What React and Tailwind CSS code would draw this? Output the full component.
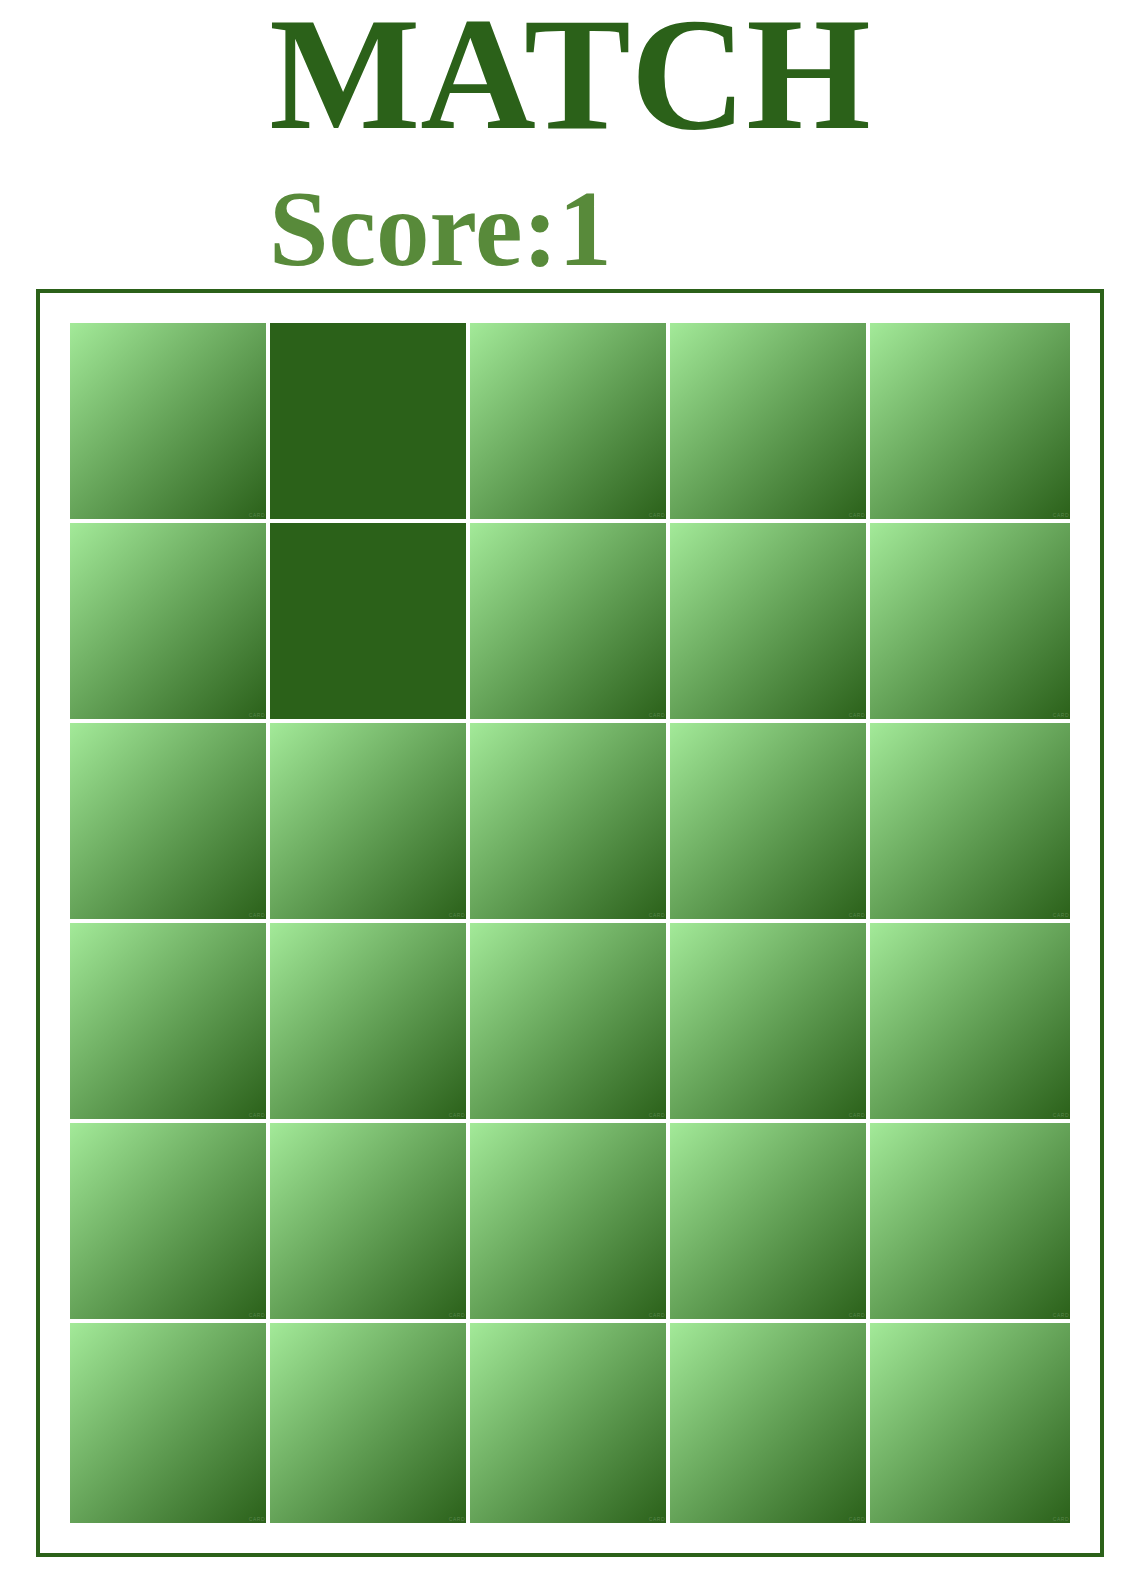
import React from "react";

const dark = new Set([1, 6]);

export default function App() {
  const tiles = Array.from({ length: 30 }, (_, i) => i);
  return (
    <div className="w-[1140px] min-h-[1592px] bg-white pt-[1px] font-['Liberation_Serif',serif]">
      <h1 className="-mt-[16px] text-center font-bold text-[160px] leading-[178px] text-[#2b6119]">
        MATCH
      </h1>
      <div className="mt-[13px] pl-[269px] font-bold text-[107px] leading-[119px] -mb-[6px] text-[#588a3a]">
        <span className="block -mt-[6px]">Score:1</span>
      </div>
      <div className="mt-[6px] ml-[36px] w-[1068px] border-4 border-[#2b6119] p-[30px]">
        <div className="grid grid-cols-[196px_196px_196px_196px_200px] grid-rows-[196px_196px_196px_196px_196px_200px] gap-[4px]">
          {tiles.map((i) =>
            dark.has(i) ? (
              <div key={i} className="bg-[#2b6119]" />
            ) : (
              <div
                key={i}
                className="relative bg-linear-to-br from-[#a3ea99] to-[#2b6119]"
              >
                <span className="absolute right-[1px] bottom-[1px] text-[5px] leading-[6px] tracking-[0.5px] text-white/20 font-['Liberation_Sans',sans-serif]">
                  CARD
                </span>
              </div>
            )
          )}
        </div>
      </div>
    </div>
  );
}
